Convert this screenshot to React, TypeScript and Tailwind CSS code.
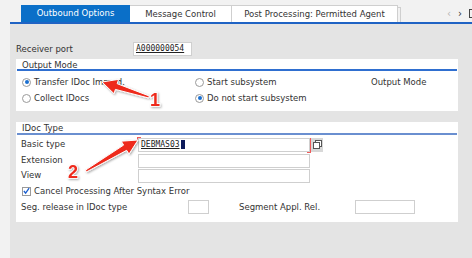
import React from "react";

function arrowPoints(tx: number, ty: number, hx: number, hy: number, tailW: number, shaftW: number, headW: number, headL: number) {
  const dx = hx - tx;
  const dy = hy - ty;
  const len = Math.hypot(dx, dy);
  const ux = dx / len;
  const uy = dy / len;
  const nx = -uy;
  const ny = ux;
  const bx = hx - ux * headL;
  const by = hy - uy * headL;
  const p = (x: number, y: number) => `${x.toFixed(1)},${y.toFixed(1)}`;
  return [
    p(tx + nx * tailW / 2, ty + ny * tailW / 2),
    p(bx + nx * shaftW / 2, by + ny * shaftW / 2),
    p(bx + nx * headW / 2, by + ny * headW / 2),
    p(hx, hy),
    p(bx - nx * headW / 2, by - ny * headW / 2),
    p(bx - nx * shaftW / 2, by - ny * shaftW / 2),
    p(tx - nx * tailW / 2, ty - ny * tailW / 2),
  ].join(" ");
}

function Radio({ checked }: { checked?: boolean }) {
  return (
    <span className="w-[9px] h-[9px] rounded-full border border-[#9a9a9a] bg-white flex items-center justify-center shrink-0">
      {checked && <span className="w-[4px] h-[4px] rounded-full bg-[#1a6fd0]" />}
    </span>
  );
}

function Input({ w, children, className = "" }: { w: string; children?: React.ReactNode; className?: string }) {
  return (
    <div className={`${w} h-[14px] bg-white border border-[#cfcfcf] flex items-center pl-[2px] ${className}`}>{children}</div>
  );
}

export default function App() {
  const a1 = arrowPoints(149, 97, 102, 82, 2, 6, 15, 15);
  const a2 = arrowPoints(86, 171, 138, 140, 2, 6, 15, 15);
  return (
    <div
      className="w-[472px] h-[258px] bg-[#f2f2f2] relative overflow-hidden text-[#333] text-[8.5px]"
      style={{ fontFamily: '"DejaVu Sans", sans-serif' }}
    >
      {/* Tabs */}
      <div className="flex h-[22px] pt-[5px] pl-[21px] items-stretch">
        <div className="w-[109px] bg-[#0a6fc8] text-white flex items-center justify-center">Outbound Options</div>
        <div className="w-[102px] bg-white border-t border-r border-[#cfcfcf] flex items-center justify-center">Message Control</div>
        <div className="w-[166px] bg-white border-t border-r border-[#cfcfcf] flex items-center justify-center">Post Processing: Permitted Agent</div>
        <div className="w-[3px] border-t border-r border-[#cfcfcf] mt-[2px]" />
        <div className="flex-1 flex items-center justify-end gap-[7px] pr-0 text-[10px]">
          <span className="text-[#b5b5b5]">‹</span>
          <span className="text-[#333]">›</span>
          <span className="w-[6px] h-[9px] border border-[#444] -mr-[3px]" />
        </div>
      </div>

      {/* Content area */}
      <div className="ml-[10px] h-[236px] bg-[#e4e4e4] border-t-2 border-[#1f63c4] pl-[6px] pr-[14px] pt-[18px]">
        <div className="flex items-center h-[14px]">
          <span className="w-[117px]">Receiver port</span>
          <Input w="w-[59px]">
            <span className="underline text-[8px] text-[#222]" style={{ fontFamily: '"DejaVu Sans Mono", monospace' }}>
              A000000054
            </span>
          </Input>
        </div>

        {/* Output Mode panel */}
        <div className="mt-[3px] bg-white h-[52px] flex flex-col">
          <div className="h-[12px] pl-[5px] pt-[1px] border-b-2 border-[#2f6fd0] ml-[1px] mr-[1px] leading-[10px]">Output Mode</div>
          <div className="flex items-center h-[16px] mt-[3px] pl-[6px]">
            <div className="w-[173px] flex items-center gap-[3px]">
              <Radio checked />
              <span>Transfer IDoc Immed.</span>
            </div>
            <div className="w-[176px] flex items-center gap-[3px]">
              <Radio />
              <span>Start subsystem</span>
            </div>
            <span>Output Mode</span>
          </div>
          <div className="flex items-center h-[16px] pl-[6px]">
            <div className="w-[173px] flex items-center gap-[3px]">
              <Radio />
              <span>Collect IDocs</span>
            </div>
            <div className="w-[176px] flex items-center gap-[3px]">
              <Radio checked />
              <span>Do not start subsystem</span>
            </div>
          </div>
        </div>

        {/* IDoc Type panel */}
        <div className="mt-[11px] bg-white h-[100px] flex flex-col">
          <div className="h-[13px] pl-[5px] pt-[1px] border-b-2 border-[#6a8fd0] ml-[1px] mr-[1px] leading-[10px]">IDoc Type</div>
          <div className="flex items-center h-[15px] mt-[2px] pl-[5px]">
            <span className="w-[117px]">Basic type</span>
            <div className="relative">
              <Input w="w-[172px]" className="border-[#7aa2d8]">
                <span className="underline text-[8px] text-[#222]" style={{ fontFamily: '"DejaVu Sans Mono", monospace' }}>
                  DEBMAS03
                </span>
                <span className="w-[4px] h-[9px] bg-[#0c1a5a] ml-[1px]" />
              </Input>
              <span className="absolute left-[-1px] top-[-1px] w-[4px] h-[1px] bg-[#f05a5a]" />
              <span className="absolute left-[-1px] top-[-1px] w-[1px] h-[4px] bg-[#f05a5a]" />
              <span className="absolute right-[-1px] bottom-[-1px] w-[4px] h-[1px] bg-[#f05a5a]" />
              <span className="absolute right-[-1px] bottom-[-1px] w-[1px] h-[15px] bg-[#f05a5a]" />
            </div>
            <div className="ml-[1px] w-[12px] h-[14px] bg-[#d8d8d8] flex items-center justify-center">
              <svg width="9" height="9" viewBox="0 0 9 9">
                <rect x="2.5" y="0.5" width="6" height="6" fill="#fff" stroke="#555" strokeWidth="1" />
                <rect x="0.5" y="2.5" width="6" height="6" fill="#fff" stroke="#555" strokeWidth="1" />
              </svg>
            </div>
          </div>
          <div className="flex items-center h-[15px] mt-[1px] pl-[5px]">
            <span className="w-[117px]">Extension</span>
            <Input w="w-[172px]" />
          </div>
          <div className="flex items-center h-[15px] pl-[5px]">
            <span className="w-[117px]">View</span>
            <Input w="w-[172px]" />
          </div>
          <div className="flex items-center h-[16px] pl-[6px] gap-[3px]">
            <span className="w-[9px] h-[9px] border border-[#9a9a9a] bg-white flex items-center justify-center">
              <svg width="8" height="8" viewBox="0 0 8 8">
                <path d="M1 4 L3 6.5 L7 0.8" fill="none" stroke="#1a5fd0" strokeWidth="1.5" />
              </svg>
            </span>
            <span>Cancel Processing After Syntax Error</span>
          </div>
          <div className="flex items-center h-[16px] pl-[5px]">
            <span className="w-[167px]">Seg. release in IDoc type</span>
            <Input w="w-[21px]" />
            <span className="ml-[30px] w-[116px]">Segment Appl. Rel.</span>
            <Input w="w-[60px]" />
          </div>
        </div>
      </div>

      {/* Annotations */}
      <svg className="absolute left-0 top-0 pointer-events-none" width="472" height="258">
        <defs>
          <filter id="sh" x="-20%" y="-20%" width="140%" height="140%">
            <feDropShadow dx="1" dy="1" stdDeviation="0.8" floodColor="#000" floodOpacity="0.35" />
          </filter>
        </defs>
        <g filter="url(#sh)">
          <polygon points={a1} fill="#ee2a1c" stroke="#fff" strokeWidth="1" strokeLinejoin="round" />
          <polygon points={a2} fill="#ee2a1c" stroke="#fff" strokeWidth="1" strokeLinejoin="round" />
          <text x="150" y="106" fill="#ee2a1c" stroke="#fff" strokeWidth="1.5" style={{ paintOrder: "stroke" }} fontSize="18" fontWeight="900" fontFamily="Liberation Sans, sans-serif">1</text>
          <text x="68" y="178" fill="#ee2a1c" stroke="#fff" strokeWidth="1.5" style={{ paintOrder: "stroke" }} fontSize="18" fontWeight="900" fontFamily="Liberation Sans, sans-serif">2</text>
        </g>
      </svg>
    </div>
  );
}
